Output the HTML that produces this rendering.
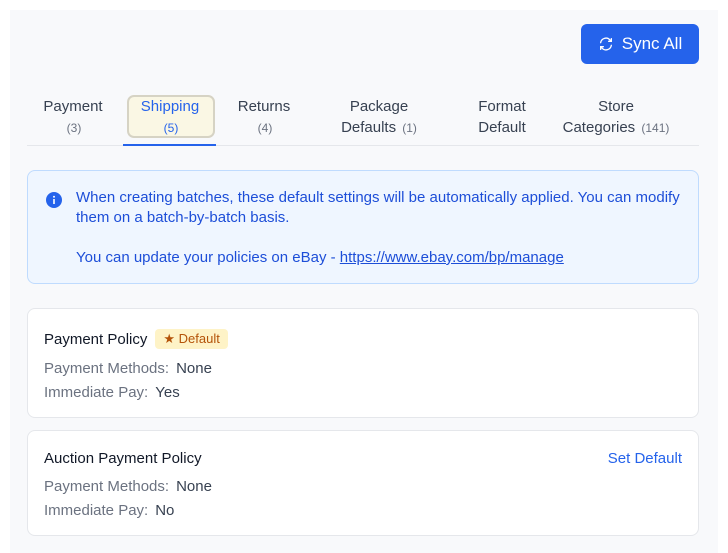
<!DOCTYPE html>
<html><head><style>
*{box-sizing:border-box;margin:0;padding:0}
body{width:728px;height:553px;background:#fff;font-family:"Liberation Sans",sans-serif;position:relative;overflow:hidden}
.panel{position:absolute;left:10px;top:10px;width:708px;height:543px;background:#f8f9fb}
.btn{position:absolute;left:581px;top:24px;width:118px;height:40px;background:#2563eb;border-radius:6px;color:#fff;font-size:17px;display:flex;align-items:center;justify-content:center;gap:8px}
.tab{position:absolute;top:96px;text-align:center;font-size:15px;color:#374151;line-height:21px;transform:translateX(-50%);white-space:nowrap}
.tab small{font-size:12px;color:#6b7280;margin-left:2px}
.line{position:absolute;left:27px;top:145px;width:672px;height:1px;background:#e5e7eb}
.ul{position:absolute;left:123px;top:144px;width:93px;height:2px;background:#2563eb}
.hl{position:absolute;left:127px;top:95px;width:88px;height:43px;background:#faf7e4;border:2px solid #d6d3c4;border-radius:7px}
.info{position:absolute;left:27px;top:170px;width:672px;height:114px;background:#eff6ff;border:1px solid #bfdbfe;border-radius:8px;color:#1d4ed8;font-size:15px;line-height:20px}
.info p{position:absolute;left:48px}
.card{position:absolute;left:27px;width:672px;background:#fff;border:1px solid #e5e7eb;border-radius:8px}
.t{position:absolute;left:16px;font-size:15px;color:#111827}
.r{position:absolute;left:16px;font-size:15px;color:#6b7280}
.r b{font-weight:normal;color:#374151;margin-left:7px}
.badge{display:inline-block;background:#fef3c7;color:#b45309;font-size:13px;padding:2px 8px;border-radius:4px;margin-left:8px;vertical-align:1px}
</style></head><body>
<div class="panel"></div>
<div class="btn"><svg width="16" height="16" viewBox="0 0 24 24" fill="none" stroke="#fff" stroke-width="2" stroke-linecap="round"><path d="M4 10a8 8 0 0 1 14-4l2 2M20 4v4h-4M20 14a8 8 0 0 1-14 4l-2-2M4 20v-4h4"/></svg>Sync All</div>
<div class="hl"></div>
<div class="tab" style="left:73px">Payment<br><small>(3)</small></div>
<div class="tab" style="left:170px;color:#2563eb">Shipping<br><small style="color:#2563eb">(5)</small></div>
<div class="tab" style="left:264px">Returns<br><small>(4)</small></div>
<div class="tab" style="left:379px">Package<br>Defaults <small>(1)</small></div>
<div class="tab" style="left:502px">Format<br>Default</div>
<div class="tab" style="left:616px">Store<br>Categories <small>(141)</small></div>
<div class="line"></div><div class="ul"></div>
<div class="info">
<svg style="position:absolute;left:18px;top:21px" width="16" height="16" viewBox="0 0 16 16"><circle cx="8" cy="8" r="8" fill="#2563eb"/><rect x="7.2" y="7" width="1.6" height="5" fill="#fff"/><circle cx="8" cy="4.8" r="1" fill="#fff"/></svg>
<p style="top:17px">When creating batches, these default settings will be automatically applied. You can modify<br>them on a batch-by-batch basis.</p>
<p style="top:77px">You can update your policies on eBay - <u>https://www.ebay.com/bp/manage</u></p>
</div>
<div class="card" style="top:308px;height:110px">
<div class="t" style="top:20px">Payment Policy<span class="badge">★ Default</span></div>
<div class="r" style="top:51px">Payment Methods:<b>None</b></div>
<div class="r" style="top:75px">Immediate Pay:<b>Yes</b></div>
</div>
<div class="card" style="top:430px;height:106px">
<div class="t" style="top:19px">Auction Payment Policy</div>
<div style="position:absolute;right:16px;top:19px;font-size:15px;color:#2563eb">Set Default</div>
<div class="r" style="top:47px">Payment Methods:<b>None</b></div>
<div class="r" style="top:71px">Immediate Pay:<b>No</b></div>
</div>
</body></html>
